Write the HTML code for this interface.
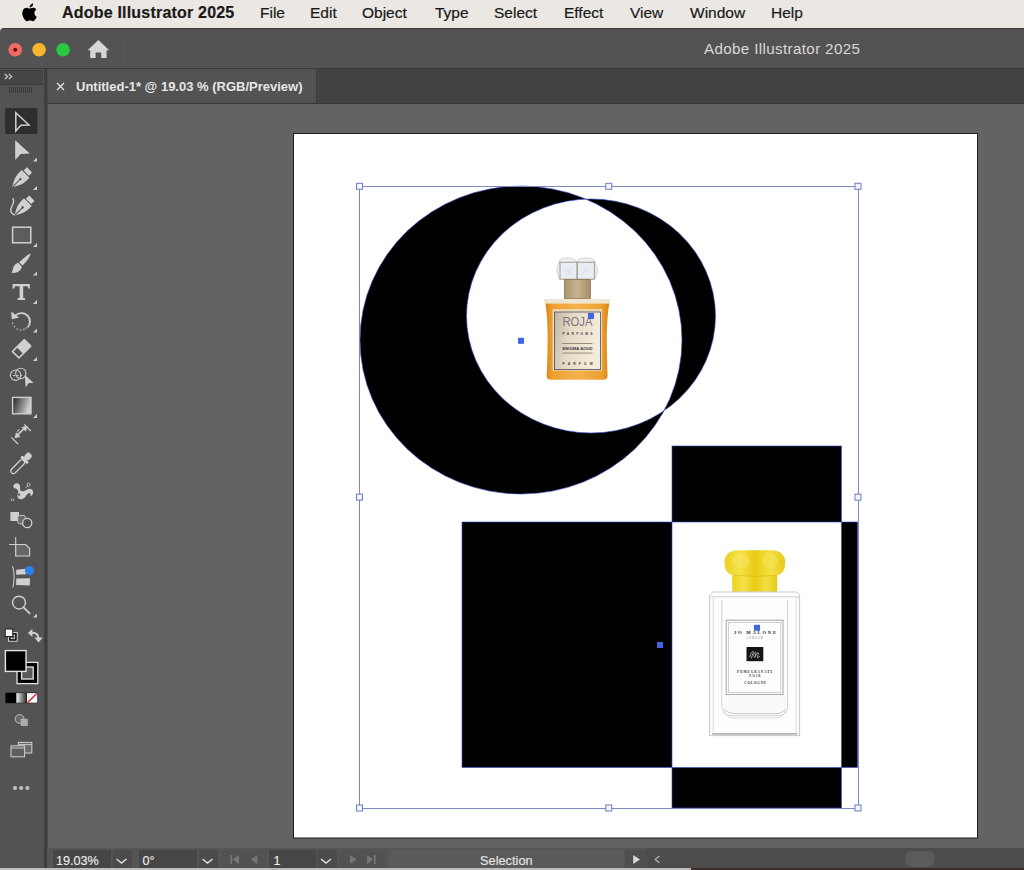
<!DOCTYPE html>
<html><head><meta charset="utf-8">
<style>
*{margin:0;padding:0;box-sizing:border-box}
html,body{width:1024px;height:870px;overflow:hidden;background:#ebe8e3;font-family:"Liberation Sans",sans-serif}
.abs{position:absolute}
#menubar{left:0;top:0;width:1024px;height:28px;background:#ebe8e3}
#menubar span{position:absolute;top:4px;font-size:15.5px;color:#1a1a1a;white-space:nowrap;-webkit-text-stroke:0.2px #1a1a1a}
#win{left:0;top:28px;width:1024px;height:842px;background:#535353;border-radius:4px 0 0 0;overflow:hidden;border-top:1.5px solid #3b3a38}
#titleline{left:0;top:68px;width:1024px;height:1px;background:#3a3a3a}
#title{left:704px;top:40.2px;font-size:15.2px;letter-spacing:0.35px;color:#d8d8d8;white-space:nowrap}
#tabbar{left:47px;top:69px;width:977px;height:35px;background:#424242}
#tab{left:47px;top:69px;width:270px;height:35px;background:#535353;border-right:1px solid #3e3e3e}
#tabtext{left:76px;top:78.7px;font-size:13px;font-weight:bold;color:#e6e6e6;white-space:nowrap}
#toolbar{left:0;top:69px;width:44px;height:801px;background:#535353}
#tbhead{left:0;top:70px;width:43px;height:13px;background:#454545;border-bottom:1px solid #3d3d3d;border-top:1px solid #3a3a3a;box-sizing:content-box}
#tbsep{left:44px;top:69px;width:2.5px;height:801px;background:#3e3e3e;border-right:1.5px solid #4a4a4a;box-sizing:content-box}
#canvas{left:48px;top:104px;width:976px;height:744px;background:#636363}
#canvtop{left:47px;top:103px;width:977px;height:1px;background:#383838}
#status{left:47px;top:848px;width:977px;height:22px;background:#575757}
.fld{position:absolute;top:850px;height:20px;background:#4a4a4a}
.st{position:absolute;font-size:13px;color:#ececec;white-space:nowrap;-webkit-text-stroke:0.15px #ececec}
</style></head><body>
<div id="menubar" class="abs">
  <svg class="abs" style="left:21.4px;top:3.2px" width="16.8" height="18.6" viewBox="0 0 17 19"><path d="M13.6 10.1c0-2.3 1.9-3.4 2-3.5-1.1-1.6-2.8-1.8-3.4-1.8-1.4-.1-2.8.9-3.5.9s-1.8-.8-3-.8C4.2 4.9 2.8 5.8 2 7.2c-1.6 2.8-.4 6.9 1.2 9.1.8 1.1 1.7 2.3 2.9 2.3 1.1 0 1.6-.7 3-.7s1.8.7 3 .7c1.2 0 2-1.1 2.7-2.2.9-1.2 1.2-2.4 1.2-2.5-.1 0-2.4-.9-2.4-3.8zM11.4 3.3c.6-.8 1-1.8.9-2.9-.9 0-2 .6-2.6 1.4-.6.6-1.1 1.7-.9 2.7 1 .1 2-.5 2.6-1.2z" fill="#000"/></svg>
  <span style="left:62px;font-weight:bold;font-size:16px;letter-spacing:0.2px">Adobe Illustrator 2025</span>
  <span style="left:260px">File</span>
  <span style="left:310px">Edit</span>
  <span style="left:362px">Object</span>
  <span style="left:435px">Type</span>
  <span style="left:494px">Select</span>
  <span style="left:564px">Effect</span>
  <span style="left:630px">View</span>
  <span style="left:690px">Window</span>
  <span style="left:771px">Help</span>
</div>
<div id="win" class="abs"></div>
<!-- title bar content -->
<svg class="abs" style="left:0;top:28px" width="140" height="40" viewBox="0 28 140 40">
  <circle cx="15.2" cy="49.7" r="6.8" fill="#f26a64"/>
  <circle cx="15.2" cy="49.7" r="2" fill="#6e0a0a"/>
  <circle cx="39.1" cy="49.7" r="6.8" fill="#f8b72c"/>
  <circle cx="63.1" cy="49.7" r="6.8" fill="#2ac840"/>
  <path d="M98.4 40 L109.2 50.3 L106.6 50.3 L106.6 58 L101.2 58 L101.2 52.5 L95.6 52.5 L95.6 58 L90.2 58 L90.2 50.3 L87.6 50.3 Z" fill="#d6d6d6"/>
  <rect x="122.6" y="38" width="1" height="25" fill="#5e5e5e"/>
</svg>
<div id="title" class="abs">Adobe Illustrator 2025</div>
<div id="titleline" class="abs"></div>
<div id="tabbar" class="abs"></div>
<div id="tab" class="abs"></div>
<div id="tabtext" class="abs">Untitled-1* @ 19.03 % (RGB/Preview)</div>
<svg class="abs" style="left:55px;top:80.5px" width="11" height="11" viewBox="0 0 11 11"><path d="M2 2 L9 9 M9 2 L2 9" stroke="#e0e0e0" stroke-width="1.4"/></svg>
<div id="toolbar" class="abs"></div>
<div id="tbhead" class="abs"></div>
<div id="tbsep" class="abs"></div>
<div id="canvtop" class="abs"></div>
<div id="canvas" class="abs"></div>
<div id="status" class="abs"></div>
<!--TOOLS--><svg class="abs" style="left:0;top:0" width="47" height="870" viewBox="0 0 47 870">
  <defs>
    <linearGradient id="tgrad" x1="0" y1="0" x2="1" y2="0.3">
      <stop offset="0" stop-color="#1e1e1e"/><stop offset="1" stop-color="#d0d0d0"/>
    </linearGradient>
    <linearGradient id="cmgrad" x1="0" y1="0" x2="1" y2="0">
      <stop offset="0" stop-color="#f4f4f4"/><stop offset="1" stop-color="#2a2a2a"/>
    </linearGradient>
  </defs>
  <!-- panel header -->
  <path d="M4.8 74 L7.6 76.5 L4.8 79 M8.8 74 L11.6 76.5 L8.8 79" stroke="#c4c4c4" stroke-width="1.3" fill="none"/>
  <g fill="#3a3a3a">
    <rect x="9" y="87" width="1" height="6"/><rect x="11" y="87" width="1" height="6"/><rect x="13" y="87" width="1" height="6"/>
    <rect x="15" y="87" width="1" height="6"/><rect x="17" y="87" width="1" height="6"/><rect x="19" y="87" width="1" height="6"/>
    <rect x="21" y="87" width="1" height="6"/><rect x="23" y="87" width="1" height="6"/><rect x="25" y="87" width="1" height="6"/>
    <rect x="27" y="87" width="1" height="6"/><rect x="29" y="87" width="1" height="6"/><rect x="31" y="87" width="1" height="6"/>
  </g>
  <!-- selected bg -->
  <rect x="5" y="108" width="32.5" height="26" rx="2" fill="#2e2e2e"/>
  <g fill="#cfcfcf" stroke="none">
  <!-- subtool triangles -->
  <path d="M37 157.5 L37 161.5 L33 161.5 Z"/>
  <path d="M37 186 L37 190 L33 190 Z"/>
  <path d="M37 243 L37 247 L33 247 Z"/>
  <path d="M37 271.5 L37 275.5 L33 275.5 Z"/>
  <path d="M37 300 L37 304 L33 304 Z"/>
  <path d="M37 328.5 L37 332.5 L33 332.5 Z"/>
  <path d="M37 357 L37 361 L33 361 Z"/>
  <path d="M37 414 L37 418 L33 418 Z"/>
  <path d="M37 613.5 L37 617.5 L33 617.5 Z"/>
  </g>
  <!-- 1 selection -->
  <path d="M15.8 112.8 L29 125 L20.8 125.3 L15.8 131 Z" fill="none" stroke="#d0d0d0" stroke-width="1.5" stroke-linejoin="miter"/>
  <!-- 2 direct selection -->
  <path d="M15.2 140.2 L29.8 153.6 L20.6 153.9 L15.2 160 Z" fill="#d0d0d0"/>
  <!-- 3 pen -->
  <g transform="translate(20.9 178.5) rotate(45) scale(0.94)">
    <rect x="-4" y="-13" width="8" height="5" rx="0.5" fill="#d0d0d0"/>
    <path d="M-5.8 -7 L5.8 -7 L5.8 -2.5 Q5.8 4.5 0 13 Q-5.8 4.5 -5.8 -2.5 Z" fill="#d0d0d0"/>
    <path d="M0 12.5 L0 1.5" stroke="#535353" stroke-width="1.1"/>
    <circle cx="0" cy="0.8" r="1.3" fill="#535353"/>
  </g>
  <!-- 4 curvature pen -->
  <g transform="translate(23.2 206.8) rotate(45) scale(0.94)">
    <rect x="-4" y="-13" width="8" height="5" rx="0.5" fill="#d0d0d0"/>
    <path d="M-5.8 -7 L5.8 -7 L5.8 -2.5 Q5.8 4.5 0 13 Q-5.8 4.5 -5.8 -2.5 Z" fill="#d0d0d0"/>
    <path d="M0 12.5 L0 1.5" stroke="#535353" stroke-width="1.1"/>
    <circle cx="0" cy="0.8" r="1.3" fill="#535353"/>
  </g>
  <path d="M12.6 198.2 C14.6 199.8 13.6 203 11.8 206.5 C9.8 210 10.6 214.2 14.8 215" fill="none" stroke="#d0d0d0" stroke-width="1.4"/>
  <!-- 5 rectangle -->
  <rect x="12.6" y="227.2" width="18.2" height="15.6" fill="#5d5d5d" stroke="#d0d0d0" stroke-width="1.5"/>
  <!-- 6 paintbrush -->
  <path d="M30.6 253.6 C30.6 256 26.6 261.6 22.6 265.6 L19.2 262.4 C23.4 258.4 28.6 253.8 30.6 253.6 Z" fill="#d0d0d0"/>
  <path d="M18.4 263 L21.8 266.4 C21.6 270.4 17.2 273.4 11.6 272.8 C12.8 271.6 12.6 269 13.6 266.8 C14.6 264.6 16.4 263.2 18.4 263 Z" fill="#d0d0d0"/>
  <!-- 7 type -->
  <path d="M12.6 284 L29.8 284 L29.8 288.6 L28.2 288.6 L27.8 286.2 L23.2 286.2 L23.2 298 L25 298 L25 300 L17.6 300 L17.6 298 L19.6 298 L19.6 286.2 L14.8 286.2 L14.4 288.6 L12.6 288.6 Z" fill="#d0d0d0"/>
  <!-- 8 rotate -->
  <path d="M15.6 315.4 C18.8 312.2 24.8 312.2 28.2 316.4 C30.8 319.8 30.4 324.6 27.6 327.4" fill="none" stroke="#d0d0d0" stroke-width="1.9"/>
  <path d="M11.2 311.4 L11.8 319.2 L19.2 317.6 Z" fill="#d0d0d0"/>
  <g fill="#c4c4c4">
    <circle cx="12.6" cy="323.2" r="0.8"/><circle cx="14.4" cy="326.6" r="0.8"/><circle cx="17.2" cy="329" r="0.8"/>
    <circle cx="20.6" cy="330" r="0.8"/><circle cx="24" cy="329.4" r="0.8"/><circle cx="26.2" cy="328" r="0.8"/>
  </g>
  <!-- 9 eraser -->
  <g transform="translate(21.6 348.8) rotate(-45) scale(0.9)">
    <rect x="-10.2" y="-6" width="20.4" height="12" rx="1.2" fill="#d0d0d0"/>
    <rect x="-8.4" y="-4.2" width="5.8" height="8.4" fill="#535353"/>
  </g>
  <!-- 10 shape builder -->
  <circle cx="15.6" cy="375.2" r="5.2" fill="none" stroke="#c8c8c8" stroke-width="1.1"/>
  <circle cx="20.8" cy="373.4" r="5.2" fill="none" stroke="#c8c8c8" stroke-width="1.1"/>
  <path d="M13 375.5 L15 375.5 M16.5 375.5 L18.5 375.5 M20 375.5 L22 375.5" stroke="#c8c8c8" stroke-width="1"/>
  <path d="M24.8 374.8 L33.6 383 L28.8 383 L25.6 387.2 Z" fill="#d0d0d0"/>
  <!-- 11 gradient -->
  <rect x="12.6" y="397.4" width="18.4" height="16.4" fill="url(#tgrad)" stroke="#d0d0d0" stroke-width="1.4"/>
  <!-- 12 width -->
  <path d="M16.4 436.2 L25.6 427" stroke="#d0d0d0" stroke-width="1.7"/>
  <path d="M24.2 424.4 L30.8 431" stroke="#d0d0d0" stroke-width="1.2"/>
  <path d="M11.4 437.4 L18 444" stroke="#d0d0d0" stroke-width="1.2"/>
  <path d="M27.4 425.8 L21.4 427.2 L26 431.8 Z" fill="#d0d0d0"/>
  <path d="M14.6 438.2 L20.6 436.8 L16 432.2 Z" fill="#d0d0d0"/>
  <path d="M17.2 431.6 L19.4 429.4" stroke="#c4c4c4" stroke-width="1.1"/>
  <!-- 13 eyedropper -->
  <g transform="translate(21 463.4) rotate(45)">
    <rect x="-2.6" y="-4" width="5.2" height="17.4" rx="2.6" fill="none" stroke="#d0d0d0" stroke-width="1.3"/>
    <rect x="-4.8" y="-6.6" width="9.6" height="3" rx="1" fill="#d0d0d0"/>
    <rect x="-3.2" y="-13.6" width="6.4" height="7.4" rx="3" fill="#d0d0d0"/>
  </g>
  <!-- 14 puppet warp -->
  <path d="M13.2 486.4 C14 482.6 18.6 482 19.8 485.2 C20.6 487.4 19.4 489.2 20.6 490.6 C22.2 492.2 25.4 490.4 27.4 489.4 C29.8 488.2 32.6 489 33 491.6 C33.4 494 32 496 30.6 496.6 C31 494.8 30.2 492.6 28.6 493.2 C26.8 494 25.6 497.8 22.4 499 C19.6 500 17 498.4 17.4 495.6 C17.6 493.6 19 492 17.6 489.8 C16.6 488.2 14.4 489.2 13.2 486.4 Z" fill="#d0d0d0"/>
  <circle cx="19" cy="494.6" r="1.2" fill="#535353"/>
  <circle cx="28.6" cy="484.6" r="1.5" fill="none" stroke="#c8c8c8" stroke-width="0.9"/>
  <path d="M25.6 488 L27.6 486" stroke="#c8c8c8" stroke-width="0.9"/>
  <path d="M11.6 498.6 L11.6 501 M13.4 498.6 L13.4 501" stroke="#c8c8c8" stroke-width="0.9"/>
  <!-- 15 blend -->
  <rect x="10.4" y="512" width="8.6" height="9" fill="#d0d0d0"/>
  <rect x="17.8" y="515.4" width="7.6" height="8.4" rx="2" fill="#6a6a6a" stroke="#c8c8c8" stroke-width="1"/>
  <circle cx="27.2" cy="523" r="4.6" fill="#535353" stroke="#d0d0d0" stroke-width="1.3"/>
  <circle cx="27.2" cy="523" r="1.6" fill="#4a4a4a"/>
  <!-- 16 artboard -->
  <path d="M15.7 537 L15.7 544.5 M9.2 544.5 L15.7 544.5" stroke="#d0d0d0" stroke-width="1.1"/>
  <path d="M15.7 544.5 L25.6 544.5 L29.6 548.5 L29.6 556 L15.7 556 Z" fill="#666" stroke="#d0d0d0" stroke-width="1.2"/>
  <!-- 17 toolbar edit -->
  <path d="M12.4 566 C14.6 571 14.6 583 12.6 587.6" fill="none" stroke="#c8c8c8" stroke-width="1.1"/>
  <path d="M16.2 569.8 L25.6 568.8 L26 574.2 L16.2 574.8 Z" fill="#d0d0d0"/>
  <path d="M16.2 578.6 L30 578.2 L29.8 585.6 L16.2 585 Z" fill="#d0d0d0"/>
  <circle cx="29.6" cy="570.6" r="4.6" fill="#2a7fe8"/>
  <!-- 18 zoom -->
  <circle cx="19" cy="602.6" r="6.4" fill="none" stroke="#d0d0d0" stroke-width="1.4"/>
  <path d="M23.6 607.4 L29.6 613.4" stroke="#d0d0d0" stroke-width="1.9" stroke-linecap="round"/>
  <!-- default fill/stroke -->
  <rect x="8.6" y="632.6" width="8.6" height="8.6" fill="#000" stroke="#e0e0e0" stroke-width="1"/>
  <rect x="11" y="635" width="3.8" height="3.8" fill="#535353" stroke="#e0e0e0" stroke-width="0.8"/>
  <rect x="5.2" y="629" width="7.6" height="7.6" fill="#f4f4f4" stroke="#1a1a1a" stroke-width="1"/>
  <!-- swap -->
  <path d="M31.6 632.8 C35.8 632.6 38.4 634.6 38.6 638.4" fill="none" stroke="#cfcfcf" stroke-width="2"/>
  <path d="M28 632.9 L32.4 628.8 L32.4 637 Z" fill="#cfcfcf"/>
  <path d="M34.4 637.6 L42.8 637.6 L38.6 642.4 Z" fill="#cfcfcf"/>
  <!-- stroke square -->
  <rect x="17" y="662.4" width="20.8" height="21.2" fill="#000" stroke="#e4e4e4" stroke-width="1.3"/>
  <rect x="21.6" y="667" width="11.6" height="12" fill="#5a5a5a" stroke="#e4e4e4" stroke-width="1.3"/>
  <!-- fill square -->
  <rect x="5.4" y="650.6" width="20.6" height="20.8" fill="#000" stroke="#e4e4e4" stroke-width="1.4"/>
  <!-- color mode -->
  <rect x="5.3" y="692.6" width="32.3" height="10.6" fill="#1a1a1a"/>
  <rect x="5.8" y="693.1" width="10.2" height="9.6" fill="#000"/>
  <rect x="16.4" y="693.1" width="10.2" height="9.6" fill="url(#cmgrad)"/>
  <rect x="27" y="693.1" width="10.2" height="9.6" fill="#f6f6f6"/>
  <path d="M27.6 702.4 L36.8 693.4" stroke="#e02020" stroke-width="1.4"/>
  <!-- draw mode -->
  <circle cx="19.6" cy="719" r="4.4" fill="#6a6a6a" stroke="#c0c0c0" stroke-width="1"/>
  <rect x="21.2" y="719.2" width="6" height="6.4" fill="#9a9a9a" stroke="#c0c0c0" stroke-width="0.8"/>
  <path d="M21.2 721.4 L27.2 721.4 M21.2 723.4 L27.2 723.4 M23.2 719.2 L23.2 725.6 M25.2 719.2 L25.2 725.6" stroke="#c0c0c0" stroke-width="0.6"/>
  <!-- screen mode -->
  <rect x="18.4" y="742.4" width="13.4" height="10.6" fill="#6a6a6a" stroke="#c8c8c8" stroke-width="1.1"/>
  <path d="M18.4 744.6 L31.8 744.6" stroke="#c8c8c8" stroke-width="1"/>
  <rect x="11" y="745.8" width="13.6" height="11" fill="#5e5e5e" stroke="#c8c8c8" stroke-width="1.1"/>
  <path d="M11 748 L24.6 748" stroke="#c8c8c8" stroke-width="1"/>
  <!-- more -->
  <circle cx="15" cy="788" r="2.1" fill="#bdbdbd"/>
  <circle cx="21.2" cy="788" r="2.1" fill="#bdbdbd"/>
  <circle cx="27.4" cy="788" r="2.1" fill="#bdbdbd"/>
</svg>
<!--/TOOLS-->
<!--ART--><svg class="abs" style="left:0;top:0" width="1024" height="870" viewBox="0 0 1024 870">
  <!-- artboard -->
  <rect x="293" y="133" width="685" height="705.5" fill="#1e1e1e"/>
  <rect x="294" y="134" width="683" height="703.5" fill="#ffffff"/>
  <!-- ellipses xor -->
  <path fill-rule="evenodd" fill="#000" d="M360 340 A161 154 0 1 0 682 340 A161 154 0 1 0 360 340 Z M466.5 316 A124.5 117 0 1 0 715.5 316 A124.5 117 0 1 0 466.5 316 Z"/>
  <ellipse cx="521" cy="340" rx="161" ry="154" fill="none" stroke="#3a4fc8" stroke-width="0.8" opacity="0.8"/>
  <ellipse cx="591" cy="316" rx="124.5" ry="117" fill="none" stroke="#3a4fc8" stroke-width="0.8" opacity="0.8"/>
  <!-- rects xor -->
  <path fill-rule="evenodd" fill="#000" d="M462 522 H857.6 V767.4 H462 Z M672 446 H841.5 V808 H672 Z"/>
  <rect x="462" y="522" width="395.6" height="245.4" fill="none" stroke="#3a4fc8" stroke-width="0.8" opacity="0.8"/>
  <rect x="672" y="446" width="169.5" height="362" fill="none" stroke="#3a4fc8" stroke-width="0.8" opacity="0.8"/>
  <!--BOTTLES-->  <defs>
    <linearGradient id="orng" x1="0" y1="0" x2="1" y2="0">
      <stop offset="0" stop-color="#d98618"/><stop offset="0.12" stop-color="#f0a030"/><stop offset="0.5" stop-color="#f3b24e"/><stop offset="0.88" stop-color="#eea032"/><stop offset="1" stop-color="#d78417"/>
    </linearGradient>
    <linearGradient id="lbl" x1="0" y1="0" x2="1" y2="0.2">
      <stop offset="0" stop-color="#bfb6a6"/><stop offset="0.4" stop-color="#e6dcc6"/><stop offset="1" stop-color="#f4ecda"/>
    </linearGradient>
    <linearGradient id="neck" x1="0" y1="0" x2="1" y2="0">
      <stop offset="0" stop-color="#a8946e"/><stop offset="0.5" stop-color="#c6b28e"/><stop offset="1" stop-color="#a48f68"/>
    </linearGradient>
    <linearGradient id="yel" x1="0" y1="0" x2="1" y2="0">
      <stop offset="0" stop-color="#ecd21e"/><stop offset="0.25" stop-color="#f6e04a"/><stop offset="0.5" stop-color="#e8cc12"/><stop offset="0.75" stop-color="#f4de42"/><stop offset="1" stop-color="#e6cc1c"/>
    </linearGradient>
    <linearGradient id="glassbot" x1="0" y1="0" x2="0" y2="1">
      <stop offset="0" stop-color="#f6f6f6"/><stop offset="0.6" stop-color="#ededed"/><stop offset="1" stop-color="#d4d4d4"/>
    </linearGradient>
  </defs>
  <!-- ROJA bottle -->
  <g>
    <path d="M559 263 Q558 258 567 258 Q575 258 576.5 262 Q578 258 586 258 Q596 258 595 263 L598 270 L595 279 L559 279 L556.6 270 Z" fill="#eef0f3" stroke="#c4c4c4" stroke-width="0.7"/>
    <rect x="560" y="262.2" width="17" height="17" fill="#eaeef4" stroke="#a39c8e" stroke-width="1"/>
    <rect x="577.4" y="262.2" width="17" height="17" fill="#eaeef4" stroke="#a39c8e" stroke-width="1"/>
    <path d="M564 268 L572 275 M572 267 L567 275 M581 275 L589 267 M583 268 L588 272" stroke="#8898b4" stroke-width="0.8" opacity="0.3"/>
    <rect x="564.4" y="279.4" width="26" height="19" fill="url(#neck)" stroke="#8c7a58" stroke-width="0.8"/>
    
    <path d="M544 299 L610.2 299 L609.6 303.6 L544.6 303.6 Z" fill="#efe6d2"/>
    <path d="M545.4 303.4 L609.2 303.4 Q606.4 320 606.8 345 Q607.2 368 607.6 376 Q607.4 379.8 603 379.8 L551 379.8 Q546.6 379.8 546.6 376 Q547.2 368 547.6 345 Q548 320 545.4 303.4 Z" fill="url(#orng)"/>
    <rect x="552.6" y="309.2" width="49.4" height="61.4" fill="#ecdcbc"/>
    <rect x="554.6" y="312" width="46" height="57.6" fill="url(#lbl)" stroke="#4a4a62" stroke-width="0.8"/>
    <text x="577.5" y="326.2" text-anchor="middle" font-family="Liberation Sans" font-size="12.2" fill="#6a6478" opacity="0.85" textLength="30" lengthAdjust="spacingAndGlyphs">ROJA</text>
    <text x="577.5" y="334.8" text-anchor="middle" font-family="Liberation Sans" font-size="3.4" font-weight="bold" fill="#4a4658" textLength="30" lengthAdjust="spacing">PARFUMS</text>
    <rect x="562" y="343" width="30.5" height="0.9" fill="#8a8478"/>
    <text x="577.5" y="350.2" text-anchor="middle" font-family="Liberation Sans" font-size="4" font-weight="bold" fill="#3a3644" textLength="30" lengthAdjust="spacingAndGlyphs">ENIGMA AOUD</text>
    <rect x="562" y="352.6" width="30.5" height="0.9" fill="#8a8478"/>
    <text x="577.5" y="364.8" text-anchor="middle" font-family="Liberation Sans" font-size="3.4" font-weight="bold" fill="#3e3a4c" textLength="30" lengthAdjust="spacing">PARFUM</text>
  </g>
  <!-- JO MALONE bottle -->
  <g>
    <path d="M732.2 572 L777.3 572 L777.3 591.8 L732.2 591.8 Z" fill="url(#yel)"/>
    <path d="M738 550.2 L771.6 550.2 Q785.2 550.6 785.2 563 Q785.2 574.4 775.6 575.6 L734 575.6 Q724.5 574.4 724.5 563 Q724.5 550.6 738 550.2 Z" fill="url(#yel)"/>
    <ellipse cx="741" cy="561" rx="9" ry="7" fill="#f8e866" opacity="0.45"/><ellipse cx="770" cy="561" rx="8" ry="7" fill="#f8e866" opacity="0.4"/>
    <path d="M733.6 575.4 Q755 577.4 776 575.4" stroke="#d8b80c" stroke-width="0.8" fill="none" opacity="0.7"/>
    <path d="M712.6 592 L796.8 592 L799.6 595 L799.6 735.6 L709.6 735.6 L709.6 595 Z" fill="#fdfdfd" stroke="#c2c2c2" stroke-width="0.9"/>
    <path d="M709.8 596.8 L799.4 596.8" stroke="#c8c8c8" stroke-width="0.8"/>
    <path d="M713.2 597 L713.2 732 M796 597 L796 732" stroke="#d6d6d6" stroke-width="0.9"/>
    <path d="M712 733.8 L797.4 733.8" stroke="#b4b4b4" stroke-width="1.8"/>
    <path d="M721.8 600 L721.8 706 Q721.8 715.6 731 715.6 L778.4 715.6 Q787.6 715.6 787.6 706 L787.6 600" fill="none" stroke="#cfcfcf" stroke-width="0.9"/>
    <path d="M724 710 Q726 717.8 733 717.8 L776.4 717.8 Q783.4 717.8 785.4 710" fill="none" stroke="#d4d4d4" stroke-width="0.8"/>
    <path d="M723 696 L786.4 696 L786.4 705 Q786.4 713.6 778 713.6 L731.4 713.6 Q723 713.6 723 705 Z" fill="#fafafa"/>
    <path d="M724 709 Q728 713.4 734 713.6 L776 713.6 Q782 713.4 785.6 709" fill="none" stroke="#c0c0c0" stroke-width="0.9"/>
    <rect x="726.2" y="620.2" width="56.8" height="74.4" fill="#fdfdfd" stroke="#9c9c9c" stroke-width="0.9"/>
    <rect x="728.4" y="622.4" width="52.4" height="70" fill="none" stroke="#bdbdbd" stroke-width="0.7"/>
    <text x="755" y="634.4" text-anchor="middle" font-family="Liberation Serif" font-size="4.6" font-weight="bold" fill="#222" textLength="42" lengthAdjust="spacing">JO MALONE</text>
    <text x="754.6" y="639.2" text-anchor="middle" font-family="Liberation Sans" font-size="2.6" fill="#777" textLength="16" lengthAdjust="spacing">LONDON</text>
    <rect x="746.5" y="647" width="16.8" height="14.2" fill="#141414"/>
    <path d="M749.6 657 Q752 650 753.6 651.8 Q752 656 751 658.6 M752.8 656.6 Q755 651 756.2 652.4 Q755.4 655 754.6 657.6 Q757.4 652 758.6 653 Q757.6 656 757.2 658 Q759 656.6 760.2 656" stroke="#e8e8e8" stroke-width="0.6" fill="none"/>
    <text x="754.8" y="673.2" text-anchor="middle" font-family="Liberation Serif" font-size="3.4" font-weight="bold" fill="#333" textLength="35.6" lengthAdjust="spacing">POMEGRANATE</text>
    <text x="754.8" y="677.4" text-anchor="middle" font-family="Liberation Serif" font-size="3" font-weight="bold" fill="#333" textLength="11.4" lengthAdjust="spacing">NOIR</text>
    <text x="755.2" y="684.2" text-anchor="middle" font-family="Liberation Serif" font-size="3.4" font-weight="bold" fill="#333" textLength="21.8" lengthAdjust="spacing">COLOGNE</text>
  </g>
<!--/BOTTLES-->
  <!-- bbox -->
  <rect x="359.5" y="186.5" width="499" height="622" fill="none" stroke="#7c88c0" stroke-width="1"/>
  <g fill="#f2f6ff" stroke="#6f7cc0" stroke-width="1">
    <rect x="356.50" y="183.30" width="6" height="6"/>
    <rect x="605.75" y="183.30" width="6" height="6"/>
    <rect x="855.00" y="183.30" width="6" height="6"/>
    <rect x="356.50" y="494.15" width="6" height="6"/>
    <rect x="855.00" y="494.15" width="6" height="6"/>
    <rect x="356.50" y="805.00" width="6" height="6"/>
    <rect x="605.75" y="805.00" width="6" height="6"/>
    <rect x="855.00" y="805.00" width="6" height="6"/>
  </g>
  <g fill="#3e66e6">
    <rect x="518" y="337.8" width="6" height="6"/>
    <rect x="588" y="313" width="6" height="6"/>
    <rect x="657" y="642" width="6" height="6"/>
    <rect x="754" y="624.8" width="6" height="6"/>
  </g>
</svg>
<!--/ART-->
<!--STATUS--><div class="abs" style="left:47px;top:848px;width:977px;height:20px;background:#555555"></div>
<div class="abs" style="left:52.5px;top:850px;width:58.5px;height:18px;background:#464646"></div>
<div class="abs" style="left:112.5px;top:850px;width:19.5px;height:18px;background:#4b4b4b"></div>
<div class="abs" style="left:138.5px;top:850px;width:58.5px;height:18px;background:#464646"></div>
<div class="abs" style="left:198.5px;top:850px;width:19.5px;height:18px;background:#4b4b4b"></div>
<div class="abs" style="left:222px;top:850px;width:44px;height:18px;background:#525252"></div>
<div class="abs" style="left:268.5px;top:850px;width:47.5px;height:18px;background:#464646"></div>
<div class="abs" style="left:317px;top:850px;width:19.5px;height:18px;background:#4b4b4b"></div>
<div class="abs" style="left:339px;top:850px;width:46px;height:18px;background:#525252"></div>
<div class="abs" style="left:388px;top:850px;width:236px;height:18px;background:#5a5a5a"></div>
<div class="abs" style="left:624.5px;top:850px;width:22px;height:18px;background:#4f4f4f"></div>
<div class="abs" style="left:647px;top:848px;width:377px;height:20px;background:#4c4c4c"></div>
<div class="abs" style="left:905px;top:850.5px;width:30px;height:16px;border-radius:8px;background:#5b5b5b"></div>
<div class="abs" style="left:0;top:868px;width:691px;height:2px;background:#bdbdbd"></div>
<div class="abs" style="left:691px;top:868px;width:333px;height:2px;background:#3a2b28"></div>
<div class="st" style="left:56px;top:853.6px;font-size:12.6px">19.03%</div>
<div class="st" style="left:142.5px;top:853.6px;font-size:12.6px">0°</div>
<div class="st" style="left:273.5px;top:853.6px;font-size:12.6px">1</div>
<div class="st" style="left:480px;top:853px;font-size:12.8px;color:#e4e4e4">Selection</div>
<svg class="abs" style="left:0;top:840px" width="700" height="30" viewBox="0 840 700 30">
  <g fill="none" stroke="#e0e0e0" stroke-width="1.4">
    <path d="M116.5 859 L121.5 863 L126.5 859"/>
    <path d="M202.5 859 L207.5 863 L212.5 859"/>
    <path d="M321 859 L326 863 L331 859"/>
  </g>
  <g fill="#777">
    <rect x="230.5" y="855" width="1.6" height="9"/>
    <path d="M239 855 L239 864 L232.8 859.5 Z"/>
    <path d="M257.4 855 L257.4 864 L251 859.5 Z"/>
    <path d="M350 855 L350 864 L356.4 859.5 Z"/>
    <path d="M367 855 L367 864 L373.2 859.5 Z"/>
    <rect x="374" y="855" width="1.6" height="9"/>
  </g>
  <path d="M633.2 855 L633.2 864 L640 859.5 Z" fill="#d8d8d8"/>
  <path d="M659.4 856 L655.2 859.4 L659.4 862.8" fill="none" stroke="#bdbdbd" stroke-width="1.1"/>
</svg>
<!--/STATUS-->
</body></html>
